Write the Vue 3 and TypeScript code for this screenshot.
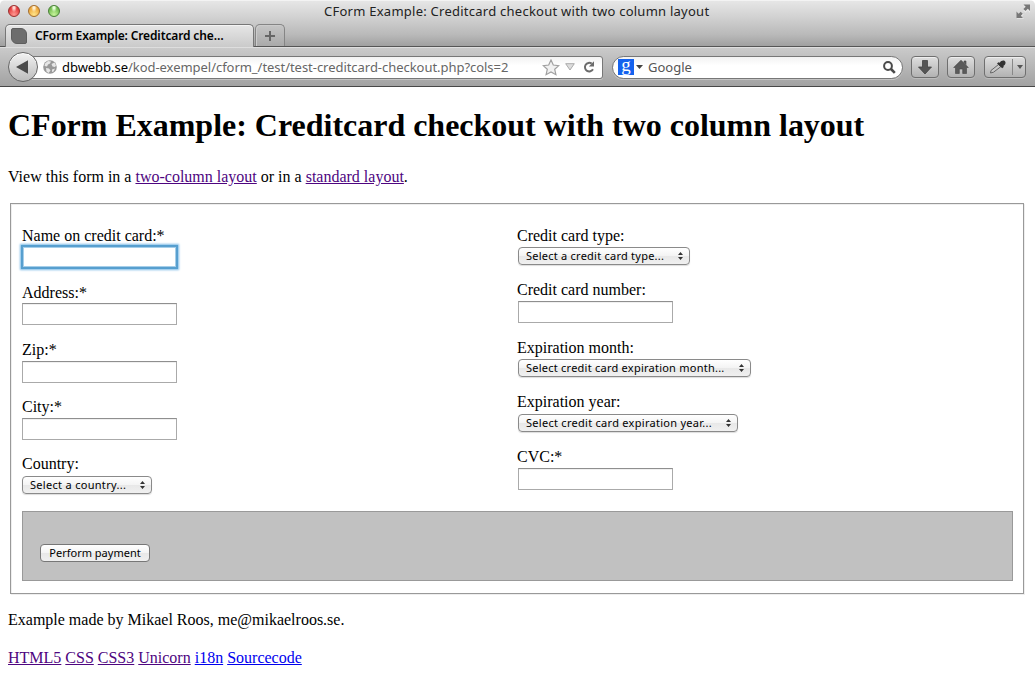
<script setup lang="ts">
interface Field {
  label: string
  kind: 'input' | 'select'
  text?: string
  size?: string
  focused?: boolean
}

const left: Field[] = [
  { label: 'Name on credit card:*', kind: 'input', focused: true },
  { label: 'Address:*', kind: 'input' },
  { label: 'Zip:*', kind: 'input' },
  { label: 'City:*', kind: 'input' },
  { label: 'Country:', kind: 'select', text: 'Select a country...', size: 'country' },
]

const right: Field[] = [
  { label: 'Credit card type:', kind: 'select', text: 'Select a credit card type...', size: 'type' },
  { label: 'Credit card number:', kind: 'input' },
  { label: 'Expiration month:', kind: 'select', text: 'Select credit card expiration month...', size: 'month' },
  { label: 'Expiration year:', kind: 'select', text: 'Select credit card expiration year...', size: 'year' },
  { label: 'CVC:*', kind: 'input' },
]

const columns = [
  { name: 'left', fields: left },
  { name: 'right', fields: right },
]

const links = [
  { text: 'HTML5', visited: true },
  { text: 'CSS', visited: true },
  { text: 'CSS3', visited: true },
  { text: 'Unicorn', visited: true },
  { text: 'i18n', visited: false },
  { text: 'Sourcecode', visited: false },
]
</script>

<template>
  <div class="window">
    <header class="titlebar">
      <div class="caption">
        <div class="lights"><i class="red"></i><i class="amber"></i><i class="green"></i></div>
        <span class="title">CForm Example: Creditcard checkout with two column layout</span>
        <svg class="expand" width="15" height="15" viewBox="0 0 15 15">
          <path d="M7 1h7v7l-2.3-2.3-2.2 2.2-2.4-2.4 2.2-2.2zM8 14H1V7l2.3 2.3 2-2 2.4 2.4-2 2z" fill="#e8e8e8" transform="translate(0 .8)" />
          <path d="M7.5.5H14V7l-2.2-2.2-2.3 2.3-2.1-2.1 2.3-2.3zM7 14H.5V7.500l2.200 2.200 2-2 2.100 2.100-2 2z" fill="#777" />
        </svg>
      </div>
      <div class="tabs">
        <div class="tab"><i class="favicon"></i><b>CForm Example: Creditcard che…</b></div>
        <div class="newtab">
          <svg width="12" height="12" viewBox="0 0 12 12"><path d="M6 1v10M1 6h10" stroke="#666" stroke-width="2" /></svg>
        </div>
      </div>
    </header>

    <nav class="toolbar">
      <div class="back">
        <svg width="12" height="14" viewBox="0 0 12 14"><path d="M0 7L12 .3v13.400z" fill="#4b4b4b" /></svg>
      </div>
      <div class="address">
        <svg class="globe" width="14" height="14" viewBox="0 0 14 14">
          <circle cx="7" cy="7" r="6.800" fill="#999" />
          <path d="M2 3.500L5 1l3 .5-1 2-2 1-1 2-2.500-.5zM8.500 4l3-1.500 1.500 3-1 1.500-2.500-.5zM3 8l3 .5 1.500 2-2 2.500-2-1.500zM9 9.500l3-1-1.500 3-1.500.5z" fill="#e6e6e6" />
        </svg>
        <span class="url"><em>dbwebb.se</em>/kod-exempel/cform_/test/test-creditcard-checkout.php?cols=2</span>
        <svg class="star" width="18" height="17" viewBox="0 0 18 17"><path d="M9 1l2.300 5 5.500.6-4.100 3.700 1.200 5.400L9 13l-4.900 2.700 1.200-5.400L1.200 6.600l5.500-.6z" fill="#f1f1f1" stroke="#a0a0a0" stroke-width="1.200" /></svg>
        <svg class="down" width="10" height="8" viewBox="0 0 10 8"><path d="M.7.700h8.600L5 7z" fill="#ddd" stroke="#aaa" /></svg>
        <svg class="reload" width="12" height="12" viewBox="0 0 12 12">
          <path d="M8.700 2.600A4.300 4.300 0 1 0 10 8.300" fill="none" stroke="#6b6b6b" stroke-width="2" />
          <path d="M11 .2V5.500H5.800z" fill="#6b6b6b" />
        </svg>
      </div>
      <div class="search">
        <span class="google">g</span>
        <svg class="caret" width="7" height="4" viewBox="0 0 7 4"><path d="M0 0h7L3.500 4z" fill="#444" /></svg>
        <span class="engine">Google</span>
        <svg class="lens" width="13" height="13" viewBox="0 0 13 13">
          <circle cx="5" cy="5" r="3.900" fill="none" stroke="#4a4a4a" stroke-width="2" />
          <path d="M8 8l3.800 3.800" stroke="#4a4a4a" stroke-width="2.600" />
        </svg>
      </div>
      <div class="tool download">
        <svg width="16" height="16" viewBox="0 0 16 16">
          <path d="M5.500 1.500h5V8h4L8 15 1.500 8h4z" fill="#555" stroke="#444" stroke-width=".8" />
        </svg>
      </div>
      <div class="tool home">
        <svg width="16" height="16" viewBox="0 0 16 16">
          <path d="M8 1.200L15.300 8.500H13.500V14.500H9.700V10H6.300V14.500H2.500V8.500H.7zM11 2h2v3.500l-2-2z" fill="#5a5a5a" stroke="#444" stroke-width=".6" />
        </svg>
      </div>
      <div class="tool picker">
        <svg class="dropper" width="17" height="14" viewBox="0 0 17 14">
          <path d="M9.500 4.500l2.300 2.200-7.300 5.500-3 .8.500-2.500z" fill="#c8c8c8" stroke="#666" />
          <path d="M8 3.500l1.500-1.300 1.200.5C11.800.8 14.200-.2 15.700.9s1 3.800-1.200 4.800l.2 1.200-1.500 1.300z" fill="#333" />
        </svg>
        <i></i>
        <svg width="6" height="4" viewBox="0 0 6 4"><path d="M0 0h6L3 4z" fill="#555" /></svg>
      </div>
    </nav>

    <main>
      <h1>CForm Example: Creditcard checkout with two column layout</h1>
      <p class="intro">View this form in a <a class="visited">two-column layout</a> or in a <a class="visited">standard layout</a>.</p>

      <form class="frame">
        <div class="columns">
          <div v-for="col in columns" :key="col.name" :class="['column', col.name]">
            <div v-for="field in col.fields" :key="field.label" :class="['field', field.kind]">
              <label>{{ field.label }}</label>
              <div v-if="field.kind === 'input'" :class="['textbox', { focused: field.focused }]"></div>
              <div v-else :class="['popup', field.size]">
                <span>{{ field.text }}</span>
                <svg width="5" height="8" viewBox="0 0 5 8"><path d="M0 3L2.500 0 5 3zM0 5h5L2.500 8z" fill="#333" /></svg>
              </div>
            </div>
          </div>
        </div>
        <div class="buttonbar"><button type="button"><span>Perform payment</span></button></div>
      </form>

      <p class="credit">Example made by Mikael Roos, me@mikaelroos.se.</p>
      <p class="links"><template v-for="link in links" :key="link.text"><a :class="{ visited: link.visited }">{{ link.text }}</a>{{ ' ' }}</template></p>
    </main>
  </div>
</template>

<style>
body { margin: 0; background: #fff; }
</style>

<style scoped>
* { box-sizing: border-box; }
svg { display: block; flex: none; }
.window { width: 1035px; height: 694px; overflow: hidden; background: #fff; border-radius: 5px 5px 3px 3px; font: 16px/18px "Liberation Serif", serif; color: #000; }

.titlebar { height: 47px; background: linear-gradient(#e6e6e6, #d2d2d2 35%, #b9b9b9 75%, #a0a0a0); border-top: 1px solid #f3f3f3; border-bottom: 1px solid #555; font-family: "Noto Sans", sans-serif; }
.caption { height: 23px; display: flex; align-items: center; position: relative; padding-left: 8px; }
.lights { display: flex; gap: 8px; margin-top: -3px; }
.lights i { width: 12px; height: 12px; border-radius: 50%; border: 1px solid; }
.lights .red { border-color: #99302f; background: radial-gradient(ellipse at 50% 15%, #ffd5d0 0 12%, transparent 40%), radial-gradient(circle at 50% 85%, #ff9a93, #e3383a 70%); }
.lights .amber { border-color: #a36c2b; background: radial-gradient(ellipse at 50% 15%, #fff0d0 0 12%, transparent 40%), radial-gradient(circle at 50% 85%, #ffe58b, #eda436 70%); }
.lights .green { border-color: #477f35; background: radial-gradient(ellipse at 50% 15%, #e5ffd8 0 12%, transparent 40%), radial-gradient(circle at 50% 85%, #c8f59c, #6fba4c 70%); }
.title { margin-left: 264px; margin-top: -3px; font-size: 13px; letter-spacing: .25px; white-space: nowrap; color: #222; }
.expand { position: absolute; right: 4px; top: 3px; }
.tabs { height: 23px; display: flex; padding-left: 5px; }
.tab { width: 249px; height: 23px; display: flex; align-items: center; padding-left: 5px; border: 1px solid #777; border-bottom: 0; border-radius: 5px 5px 0 0; background: linear-gradient(#e6e6e6, #cacaca); box-shadow: inset 0 1px #f4f4f4; }
.favicon { width: 16px; height: 16px; background: #6d6d6d; border: 1px solid #5e5e5e; border-radius: 2px 6px 2px 6px; }
.tab b { margin-left: 8px; font-size: 12px; font-weight: 600; letter-spacing: -.13px; white-space: nowrap; }
.newtab { width: 30px; height: 22px; margin-left: 1px; display: flex; align-items: center; justify-content: center; border: 1px solid #858585; border-bottom: 0; border-radius: 5px 5px 0 0; background: linear-gradient(#c5c5c5, #aaa); box-shadow: inset 1px 1px #ccc; }

.toolbar { height: 40px; display: flex; align-items: center; padding-left: 8px; background: linear-gradient(#cacaca, #a2a2a2); border-top: 1px solid #dedede; border-bottom: 1px solid #474747; font: 13px/18px "Noto Sans", sans-serif; }
.back { width: 30px; height: 30px; border: 1px solid #666; border-radius: 50%; background: linear-gradient(#f2f2f2, #bcbcbc); display: flex; align-items: center; padding-left: 7px; position: relative; z-index: 1; box-shadow: inset 0 1px #fff; }
.address { width: 571px; height: 23px; margin-left: -6px; display: flex; align-items: center; border: 1px solid #777; border-radius: 0 3px 3px 0; background: linear-gradient(#f2f2f2, #fff 40%); box-shadow: 0 1px #c4c4c4; }
.globe { margin-left: 10px; }
.url { width: 479px; margin-left: 5px; letter-spacing: -.04px; color: #666; white-space: nowrap; }
.url em { font-style: normal; color: #000; }
.star { margin-left: 1px; }
.down { margin-left: 5px; }
.reload { margin-left: 8px; }
.search { width: 291px; height: 23px; margin-left: 9px; display: flex; align-items: center; padding-left: 5px; border: 1px solid #777; border-radius: 12px; background: linear-gradient(#f2f2f2, #fff 40%); box-shadow: 0 1px #c4c4c4; }
.google { width: 16px; height: 16px; background: #1462ee; color: #fff; font: 19px/11px "Liberation Serif", serif; text-align: center; }
.caret { margin-left: 2px; }
.engine { width: 230px; margin-left: 5px; color: #555; }
.lens { margin-left: 5px; }
.tool { width: 28px; height: 22px; display: flex; align-items: center; justify-content: center; border: 1px solid #6f6f6f; border-radius: 4px; background: linear-gradient(#dedede, #b2b2b2); box-shadow: inset 0 1px #eee, 0 1px #bbb; }
.download { margin-left: 8px; }
.home { margin-left: 8px; }
.picker { width: 42px; margin-left: 9px; justify-content: flex-start; padding-left: 4px; }
.picker i { width: 1px; height: 16px; background: #888; margin: 0 4px 0 6px; }

main { padding: 19px 8px 0; }
h1 { margin: 0; font-size: 32px; line-height: 38px; letter-spacing: -.015px; white-space: nowrap; }
p { margin: 0; }
.intro { margin-top: 24px; }
a { color: #0000ee; text-decoration: underline; }
a.visited { color: #4e0580; }
.frame { width: 1014px; height: 391px; margin: 17px 0 0 2px; padding: 22.8px 11px 0; border: 1px solid #999; box-shadow: 1px 1px #eee, inset 1px 1px #eee; }
.columns { height: 284.2px; display: flex; }
.column { width: 495px; }
.left .field { height: 57.1px; }
.right .input { height: 57.4px; }
.right .select { height: 54.47px; }
label { display: block; height: 18px; }
.textbox { width: 155px; height: 22px; margin-top: 1.55px; border: 1px solid #aaa; border-top-color: #8f8f8f; box-shadow: inset 0 1px #f0f0f0; }
.right .textbox { margin: 2.15px 0 0 1px; }
.focused { border-color: #5a9fce; box-shadow: 0 0 0 1px #549fd0, 0 0 2px 2px #7dbbe6, inset 0 0 0 1px #a5cfea; }
.popup { height: 18px; margin-top: 2.400px; display: flex; align-items: center; justify-content: space-between; padding: 0 6px 0 7px; border: 1px solid #8a8a8a; border-radius: 4px; background: linear-gradient(#fff, #f4f4f4 48%, #e8e8e8 52%, #f0f0f0); box-shadow: 0 1px 1px #ddd; font: 11px/14px "Noto Sans", sans-serif; letter-spacing: .24px; white-space: nowrap; }
.right .popup { margin: 2.600px 0 0 1px; }
.country { width: 130px; }
.country span { letter-spacing: .3px; }
.type { width: 172px; }
.month { width: 233px; }
.year { width: 220px; }
.year span { letter-spacing: .28px; }
.buttonbar { width: 991px; height: 70px; border: 1px solid #999; background: #c1c1c1; padding: 32px 17px; }
button { display: block; width: 110px; height: 18px; padding: 0; text-align: center; border: 1px solid #777; border-radius: 4px; background: linear-gradient(#fff, #f4f4f4 48%, #e8e8e8 52%, #f0f0f0); font: 11px/14px "Noto Sans", sans-serif; white-space: nowrap; color: #000; }
.credit { margin-top: 17px; }
.links { margin-top: 20px; }
</style>
